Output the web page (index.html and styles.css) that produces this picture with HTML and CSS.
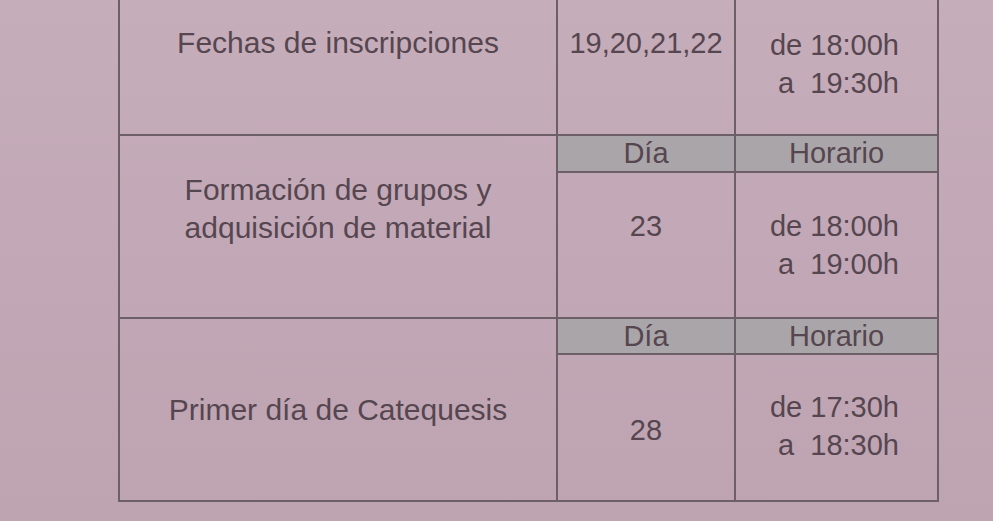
FILE: index.html
```html
<!DOCTYPE html>
<html lang="es">
<head>
<meta charset="utf-8">
<title>Catequesis</title>
<link rel="stylesheet" href="styles.css">
</head>
<body>
<div class="sheet">
  <div class="grid">
    <div class="cell label r1">Fechas de inscripciones</div>
    <div class="cell day r1">19,20,21,22</div>
    <div class="cell hours r1">de 18:00h
a  19:30h</div>

    <div class="cell label r2">Formación de grupos y<br>adquisición de material</div>
    <div class="cell head">Día</div>
    <div class="cell head">Horario</div>
    <div class="cell day b2">23</div>
    <div class="cell hours b2">de 18:00h
a  19:00h</div>

    <div class="cell label r3">Primer día de Catequesis</div>
    <div class="cell head">Día</div>
    <div class="cell head">Horario</div>
    <div class="cell day b3">28</div>
    <div class="cell hours b3h">de 17:30h
a  18:30h</div>
  </div>
</div>
</body>
</html>
```

FILE: styles.css
```css
html, body {
  margin: 0;
  padding: 0;
}
body {
  width: 993px;
  height: 521px;
  overflow: hidden;
  background: linear-gradient(180deg, #c6adba 0%, #c2a8b6 50%, #bea3b1 100%);
  font-family: "Liberation Sans", Arial, sans-serif;
  color: #554650;
  font-size: 29px;
}
.sheet {
  padding-left: 118px;
}
.grid {
  display: grid;
  grid-template-columns: 438px 178px 203px;
  grid-template-rows: 136px 37px 146px 36px 147px;
  width: 819px;
  border-left: 2px solid #6d5f67;
  box-sizing: border-box;
}
.cell {
  box-sizing: border-box;
  border-right: 2px solid #6d5f67;
  border-bottom: 2px solid #6d5f67;
  text-align: center;
  line-height: 38px;
}
.label {
  grid-column: 1;
  font-size: 30px;
}
.r1 {
  padding-top: 24px;
}
.hours.r1 {
  padding-top: 26px;
}
.r2 {
  grid-row: 2 / span 2;
  padding-top: 35px;
}
.r3 {
  grid-row: 4 / span 2;
  padding-top: 72px;
}
.hours {
  white-space: pre;
  text-align: right;
  padding-right: 38px;
}
.head {
  background: #aaa5a8;
  line-height: 35px;
}
.b2 {
  padding-top: 34px;
}
.b3 {
  padding-top: 56px;
}
.b3h {
  padding-top: 33px;
}
```
